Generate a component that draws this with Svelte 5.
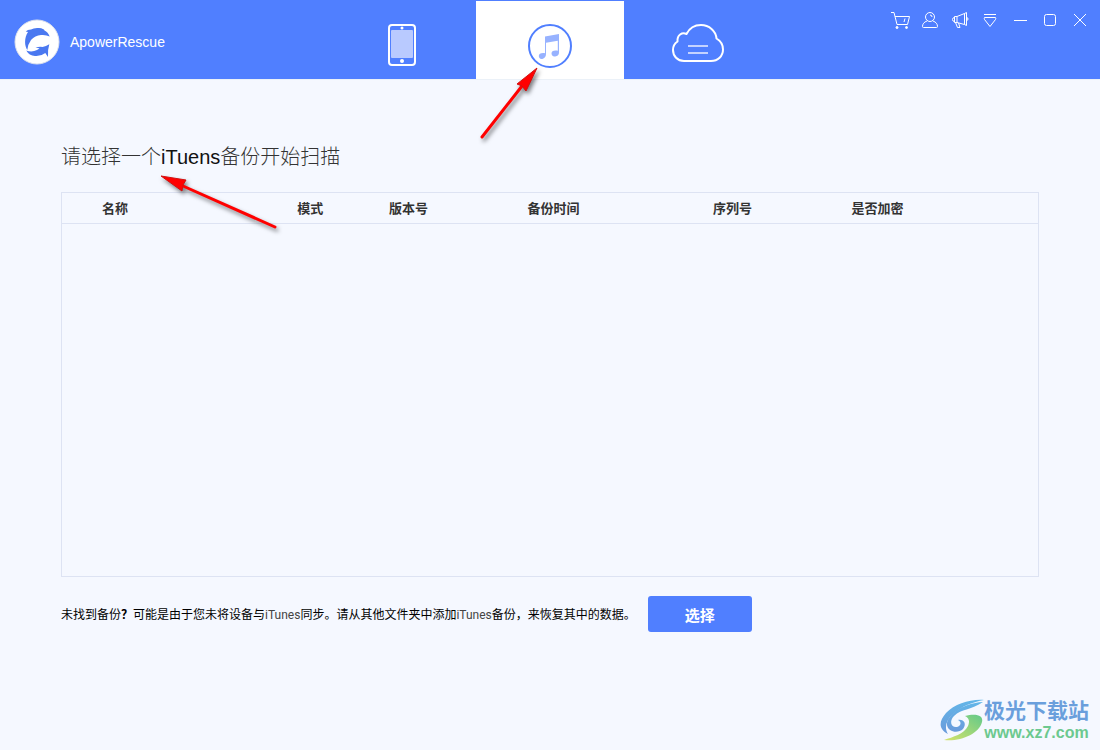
<script lang="ts">
	const columns = [
		{ title: '名称', width: 24.1 },
		{ title: '模式', width: 9.4 },
		{ title: '版本号', width: 14.2 },
		{ title: '备份时间', width: 19 },
		{ title: '序列号', width: 14.2 },
		{ title: '是否加密', width: 19.1 }
	];

	let active = $state('itunes');
</script>

<div class="app">
	<header>
		<div class="brand">
			<svg class="logo" viewBox="0 0 46 46" aria-hidden="true">
				<circle cx="23" cy="23" r="22" fill="#fff" stroke="#dfe3ec" />
				<path fill="#4a78f0" d="M13.300 31C10.500 27 10 19 14 13L11.700 12.500Q13.500 10.500 17 10.500Q20 8.500 25 9Q30 9.500 30.500 11.500Q34 13 35.700 17.500Q32 15.500 27 16Q21 16.500 17 21Q14 25 13.300 31Z" />
				<path fill="#4a78f0" d="M12.300 31.500Q18 33.500 23 31Q25 30 25.500 29.300L21.500 28.800Q25 27.500 28.500 28Q32 27.500 35.300 25.300Q33.500 31 34 38L31.300 34Q27 37.500 21 37Q15 36.500 12.300 31.500Z" />
			</svg>
			<span>ApowerRescue</span>
		</div>

		<nav>
			<button class="tab" class:active={active === 'ios'} aria-label="iOS" onclick={() => (active = 'ios')}>
				<svg width="28" height="42" viewBox="0 0 28 42">
					<rect x="1" y="1" width="26" height="40" rx="3" fill="none" stroke="#fff" stroke-width="2" />
					<rect x="3" y="6" width="22" height="28" rx="1" fill="#b9caff" />
					<circle cx="14" cy="4" r="1.500" fill="#fff" />
					<circle cx="14" cy="37" r="2" fill="#fff" />
				</svg>
			</button>
			<button class="tab" class:active={active === 'itunes'} aria-label="iTunes" onclick={() => (active = 'itunes')}>
				<svg width="44" height="44" viewBox="0 0 44 44">
					<circle cx="22" cy="22" r="21" fill="none" stroke="#507fff" stroke-width="2" />
					<path fill="#97b2ff" d="M17 12.500L31 10V28.500C31 31.500 28.500 32.500 26.500 32.500C24.500 32.500 23.500 31 23.500 29.500C23.500 27.500 25.500 26 29.800 26.800V16.800L18 18.800V30C18 33.500 15.500 35 13.500 35C11.800 35 10.800 33.500 10.800 32C10.800 30 13 28.500 17 29.200Z" />
				</svg>
			</button>
			<button class="tab" class:active={active === 'icloud'} aria-label="iCloud" onclick={() => (active = 'icloud')}>
				<svg width="52" height="38" viewBox="0 0 52 38">
					<path fill="none" stroke="#fff" stroke-width="2" stroke-linejoin="round" d="M12 37H39C46 37 51 32 51 25.500C51 20 48 16.500 44.500 14.500C44 7 37 1 29 1C22 1 17 5 14.500 10C10 8 5 11 5.500 17.500C2.500 19.500 1 22.500 1 26C1 32 5.500 37 12 37Z" />
					<path stroke="#c4d2ff" stroke-width="2" d="M16 22H36M16 29H36" />
				</svg>
			</button>
		</nav>

		<div class="tools">
			<button aria-label="购买">
				<svg viewBox="0 0 20 20">
					<path d="M1 2.500H4L7 14.500H17.500L19.500 6.500H5M14 12L15 8.500" />
					<circle cx="7" cy="17.500" r="1" fill="#fff" />
					<circle cx="16.500" cy="17.500" r="1" fill="#fff" />
				</svg>
			</button>
			<button aria-label="账户">
				<svg viewBox="0 0 20 20">
					<circle cx="10" cy="7" r="4.500" />
					<path d="M7 11C4 12 2.500 14 2.500 16.500Q2.500 17.500 3.500 17.500H16.500Q17.500 17.500 17.500 16.500C17.500 14 16 12 13 11M10 5Q12 5 12 7" />
				</svg>
			</button>
			<button aria-label="反馈">
				<svg viewBox="0 0 20 20">
					<path d="M7 6.500L14.500 3.500V14.500L7 12.500M7 6.500H4.500V12.500H7ZM4.500 7.500Q2.500 7.500 2.500 9.500Q2.500 11.500 4.500 11.500M14.500 3.500L16.500 2.500V15.500L14.500 14.500M16.500 7.500Q18 7.500 18 9Q18 10.500 16.500 10.500M5.500 12.500L7.500 17.500H10L8.500 13" />
				</svg>
			</button>
			<button aria-label="菜单">
				<svg viewBox="0 0 20 20"><path d="M4 4.500H16M4.500 7.500H15.500Q16 8.500 15.500 9.500L10 16.500L4.500 9.500Q4 8.500 4.500 7.500Z" /></svg>
			</button>
			<button aria-label="最小化">
				<svg viewBox="0 0 20 20"><path d="M4 10.500H17" /></svg>
			</button>
			<button aria-label="最大化">
				<svg viewBox="0 0 20 20"><rect x="4.500" y="4.500" width="11" height="11" rx="2" /></svg>
			</button>
			<button aria-label="关闭">
				<svg viewBox="0 0 20 20"><path d="M4 4L16 16M16 4L4 16" /></svg>
			</button>
		</div>
	</header>

	<main>
		<h1>请选择一个<span>iTuens</span>备份开始扫描</h1>

		<div class="list">
			<table>
				<colgroup>
					{#each columns as col}
						<col style="width: {col.width}%" />
					{/each}
				</colgroup>
				<thead>
					<tr>
						{#each columns as col}
							<th scope="col">{col.title}</th>
						{/each}
					</tr>
				</thead>
			</table>
		</div>

		<div class="hint">
			<p>未找到备份<b>？</b>可能是由于您未将设备与<span>iTunes</span>同步。请从其他文件夹中添加<span>iTunes</span>备份，来恢复其中的数据。</p>
			<button class="choose">选择</button>
		</div>
	</main>

	<svg class="arrow to-tab" width="80" height="90" viewBox="0 0 80 90" aria-hidden="true">
		<path d="M12 77L52 26" />
		<polygon points="67,8 47,24 52,26 56,31" />
	</svg>
	<svg class="arrow to-title" width="140" height="80" viewBox="0 0 140 80" aria-hidden="true">
		<path d="M124 62L32 21" />
		<polygon points="10,11 35,15 32,20 31,26" />
	</svg>

	<div class="watermark">
		<svg width="46" height="44" viewBox="0 0 46 44" aria-hidden="true">
			<defs>
				<linearGradient id="swoosh" x1="0" y1="0" x2="0" y2="1">
					<stop offset="0" stop-color="#63b6e8" />
					<stop offset="1" stop-color="#6a9bdb" />
				</linearGradient>
				<linearGradient id="leaf" x1="1" y1="0" x2="0" y2="1">
					<stop offset="0" stop-color="#62c98a" />
					<stop offset="1" stop-color="#d6e36a" />
				</linearGradient>
			</defs>
			<path fill="url(#swoosh)" d="M44 1C30 0 15 5 6 14C-1 22-2 30 8 35C4 29 6 21 13 15C22 7 33 3 44 1Z" />
			<path fill="url(#swoosh)" d="M43 3C30 12 22 9 14 17C9 22 11 29 17 28C21 27 22 23 18 21C24 20 27 25 23 30C18 35 8 33 7 26C6 17 22 4 43 3Z" />
			<path fill="url(#leaf)" d="M25 17C35 14 44 16 42 23C39 35 20 43 4 41C13 38 24 35 28 27C30 22 29 19 25 17Z" />
		</svg>
		<div>
			<strong>极光下载站</strong>
			<span>www.xz7.com</span>
		</div>
	</div>
</div>

<style>
	:global(body) {
		background: #f5f8ff;
	}
	.app {
		position: relative;
		min-height: 100vh;
		font-family: "Liberation Sans", "Noto Sans CJK SC", sans-serif;
		color: #333;
		background: #f5f8ff;
	}
	button {
		padding: 0;
		border: none;
		background: none;
		font: inherit;
		color: inherit;
		cursor: pointer;
	}
	svg {
		display: block;
	}
	header {
		display: grid;
		grid-template-columns: 1fr auto 1fr;
		height: 79px;
		background: #507fff;
		border-bottom: 1px solid #ebf1f8;
	}
	.brand {
		display: flex;
		align-items: center;
		gap: 10px;
		padding: 5px 0 0 14px;
		height: 74px;
		font-size: 14px;
		color: #fff;
	}
	.logo {
		width: 46px;
		height: 46px;
	}
	nav {
		display: flex;
		padding-top: 1px;
	}
	.tab {
		display: flex;
		align-items: flex-start;
		justify-content: center;
		width: 148px;
		padding-top: 23px;
	}
	.tab.active {
		background: #fff;
	}
	.tools {
		display: flex;
		justify-content: flex-end;
		align-items: flex-start;
		padding: 10px 5px 0 0;
	}
	.tools button {
		display: flex;
		justify-content: center;
		width: 30px;
	}
	.tools svg {
		width: 20px;
		height: 20px;
		fill: none;
		stroke: #fff;
		stroke-width: 1;
	}
	main {
		padding: 61px;
	}
	h1 {
		margin: 0 0 19px;
		font-size: 20px;
		font-weight: 300;
		line-height: 32px;
	}
	h1 span {
		color: #111;
	}
	.list {
		min-height: 383px;
		border: 1px solid #dde3f3;
	}
	table {
		width: 100%;
		table-layout: fixed;
		border-collapse: collapse;
	}
	th {
		height: 28px;
		padding: 2px 0 0;
		border-bottom: 1px solid #dde3f3;
		font-size: 13px;
		line-height: 20px;
		text-align: left;
	}
	th:first-child {
		padding-left: 40px;
	}
	.hint {
		display: flex;
		align-items: center;
		gap: 12px;
		margin-top: 19px;
	}
	p {
		margin: 0;
		padding-top: 2px;
		font-size: 12px;
		line-height: 20px;
		color: #000;
	}
	p span {
		font-family: Roboto, sans-serif;
		color: #444;
	}
	.choose {
		width: 104px;
		height: 36px;
		border-radius: 3px;
		background: #507fff;
		font-size: 15px;
		font-weight: bold;
		color: #fff;
	}
	.arrow {
		position: absolute;
		pointer-events: none;
		filter: drop-shadow(2px 3px 2px rgba(0, 0, 0, 0.5));
	}
	.arrow path {
		stroke: #f00;
		stroke-width: 3;
		stroke-linecap: round;
	}
	.arrow polygon {
		fill: #f00;
		stroke: #d01010;
		stroke-width: 1;
	}
	.to-tab {
		left: 470px;
		top: 60px;
	}
	.to-title {
		left: 151px;
		top: 165px;
	}
	.watermark {
		position: absolute;
		right: 11px;
		bottom: 7px;
		display: flex;
		align-items: center;
	}
	.watermark div {
		display: flex;
		flex-direction: column;
		align-items: center;
		margin-left: -2px;
	}
	.watermark strong {
		font-size: 21px;
		line-height: 24px;
		color: #6a9fdc;
	}
	.watermark span {
		font-size: 16px;
		font-weight: bold;
		line-height: 20px;
		color: #6cc98f;
	}
</style>
